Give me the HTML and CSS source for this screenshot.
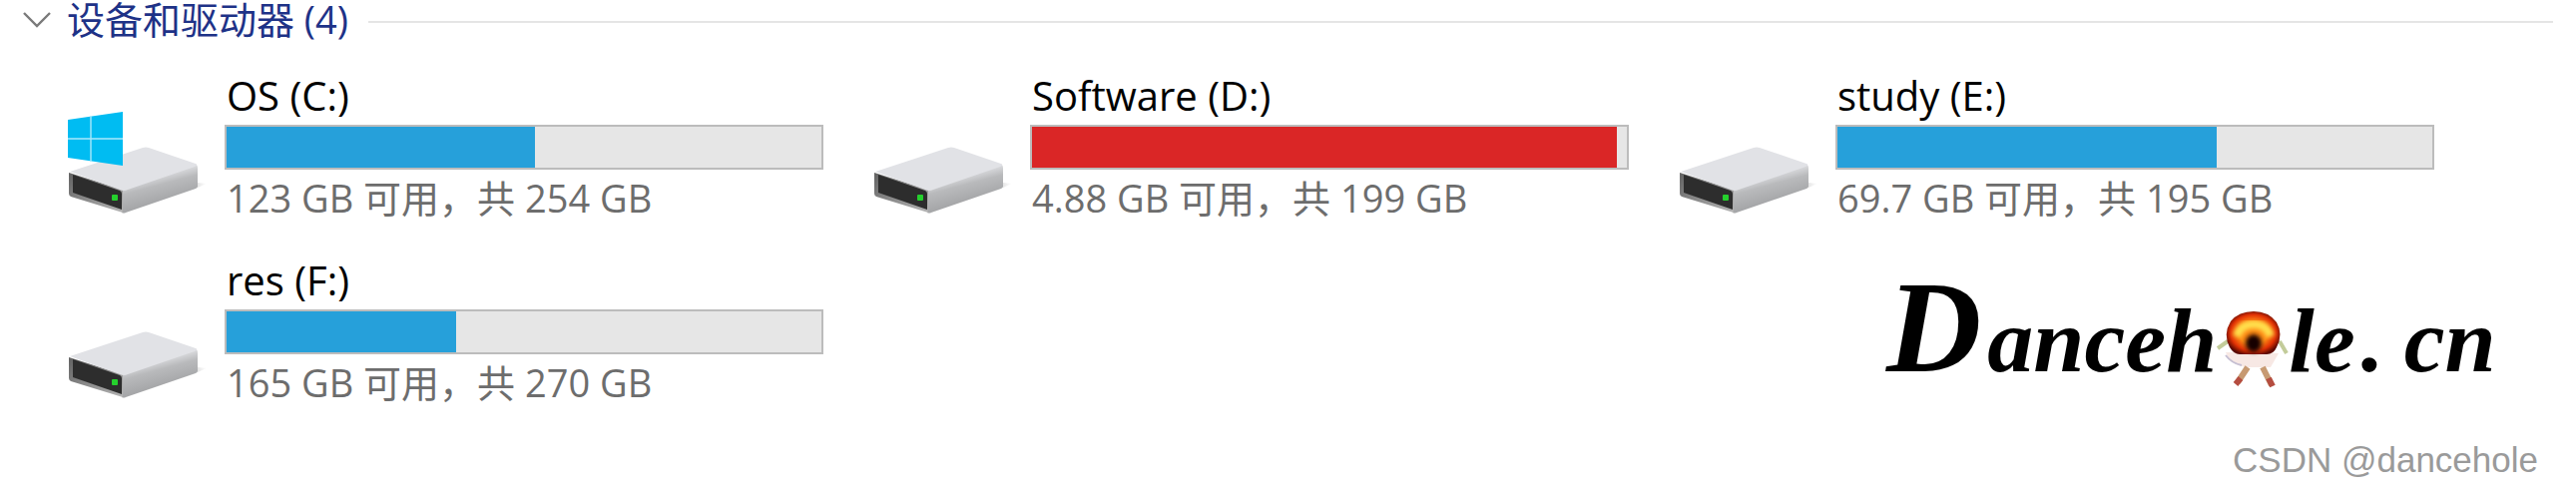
FILE: index.html
```html
<!DOCTYPE html>
<html lang="zh-CN">
<head>
<meta charset="utf-8">
<title>设备和驱动器</title>
<link rel="stylesheet" href="styles.css">
</head>
<body>
<svg class="defs" width="0" height="0" aria-hidden="true">
  <defs>
    <linearGradient id="side" gradientUnits="userSpaceOnUse" x1="88" y1="102" x2="95" y2="128">
      <stop offset="0" stop-color="#dfe0e3"/>
      <stop offset="0.4" stop-color="#b9babc"/>
      <stop offset="1" stop-color="#a6a7a9"/>
    </linearGradient>
    <linearGradient id="rim" x1="0" y1="0" x2="1" y2="1">
      <stop offset="0" stop-color="#626262"/>
      <stop offset="1" stop-color="#b4b4b4"/>
    </linearGradient>
    <linearGradient id="shade" x1="0" y1="0" x2="1" y2="0">
      <stop offset="0" stop-color="#e6e6e6"/>
      <stop offset="1" stop-color="#ffffff"/>
    </linearGradient>
    <symbol id="drive" viewBox="0 0 140 149">
      <path d="M130 110 L139 111 L130 115 Z" fill="url(#shade)"/>
      <path d="M55 117 L128 92 Q130 92 130 96 V114 Q130 115 128 116 L58 140 Q56 141 54 140 Z" fill="url(#side)"/>
      <path d="M1 100 L55 117 V140 L3 124 Q1 123 1 121 Z" fill="url(#rim)"/>
      <path d="M2 99 L75 75 Q78 74 81 75 L128 91 Q131 92 127 94 L60 117 Q56 119 52 117 Z" fill="#e1e2e6"/>
      <path d="M5 102 L52 118 Q54 119 54 121 V137 L5 120 Z" fill="#2d2d2d"/>
      <rect x="44" y="122" width="6" height="6" rx="1" fill="#25d02d"/>
    </symbol>
  </defs>
</svg>
<main class="page">
  <header class="group">
    <h2 class="group-title">
      <button class="toggle" type="button" aria-expanded="true">
        <svg class="chevron" viewBox="0 0 28 16" aria-hidden="true"><path d="M1 1 L14 14 L27 1"/></svg>
        <span class="caption">设备和驱动器 (4)</span>
      </button>
    </h2>
    <span class="rule"></span>
  </header>
  <section class="drives">
    <article class="drive">
      <svg class="icon" viewBox="0 0 140 149" aria-hidden="true">
        <use href="#drive"/>
        <path d="M0 47 L55 39 V93 L0 85 Z" fill="#00bcf2"/>
        <path d="M23 43 V89 M0 66 H55" stroke="#a9e8fb" stroke-width="1.4"/>
      </svg>
      <div class="info">
        <label class="name" for="c">OS (C:)</label>
        <progress class="bar" id="c" max="100" value="51.8"></progress>
        <p class="space">123 GB 可用，共 254 GB</p>
      </div>
    </article>
    <article class="drive">
      <svg class="icon" viewBox="0 0 140 149" aria-hidden="true"><use href="#drive"/></svg>
      <div class="info">
        <label class="name" for="d">Software (D:)</label>
        <progress class="bar full" id="d" max="100" value="98.3"></progress>
        <p class="space">4.88 GB 可用，共 199 GB</p>
      </div>
    </article>
    <article class="drive">
      <svg class="icon" viewBox="0 0 140 149" aria-hidden="true"><use href="#drive"/></svg>
      <div class="info">
        <label class="name" for="e">study (E:)</label>
        <progress class="bar" id="e" max="100" value="63.8"></progress>
        <p class="space">69.7 GB 可用，共 195 GB</p>
      </div>
    </article>
    <article class="drive">
      <svg class="icon" viewBox="0 0 140 149" aria-hidden="true"><use href="#drive"/></svg>
      <div class="info">
        <label class="name" for="f">res (F:)</label>
        <progress class="bar" id="f" max="100" value="38.6"></progress>
        <p class="space">165 GB 可用，共 270 GB</p>
      </div>
    </article>
    <div class="logo">
      <span class="initial">D</span>
      <span>anceh</span>
      <svg class="mascot" viewBox="0 0 72 80" role="img" aria-label="o">
        <defs>
          <radialGradient id="fire" cx="0.5" cy="0.5" r="0.54">
            <stop offset="0.5" stop-color="#ff8a14"/>
            <stop offset="0.78" stop-color="#e23205"/>
            <stop offset="1" stop-color="#5b0800"/>
          </radialGradient>
          <filter id="glow" x="-0.3" y="-0.3" width="1.6" height="1.6">
            <feGaussianBlur stdDeviation="2"/>
          </filter>
        </defs>
        <path d="M11 30 L1 37 M63 30 L70 42" stroke="#c3cc9a" stroke-width="4" fill="none"/>
        <path d="M9 41 Q14 54 30 56 H54 L62 42 Z" fill="#f7e8e4"/>
        <path d="M9 44 Q15 52 25 54" stroke="#c6bfd2" stroke-width="2" fill="none"/>
        <path d="M31 56 L21 71 M46 56 L55 74" stroke="#c79a72" stroke-width="6" fill="none"/>
        <path d="M24 67 L19 73 M52 67 L56 75" stroke="#b54d40" stroke-width="6" fill="none"/>
        <path d="M37 0 Q52 0 60 11 Q67 23 60 36 Q57 43 50 43 H23 Q17 43 13 36 Q6 23 14 10 Q22 0 37 0 Z" fill="url(#fire)"/>
        <path d="M20 25 Q24 13 37 13 Q50 13 54 25" stroke="#ffe04e" stroke-width="8" fill="none" filter="url(#glow)"/>
        <ellipse cx="37" cy="32" rx="8" ry="9" fill="#160000" filter="url(#glow)"/>
      </svg>
      <span>le</span>
      <span class="dot">.</span>
      <span>cn</span>
    </div>
  </section>
  <footer class="credit">CSDN @dancehole</footer>
</main>
</body>
</html>
```
FILE: styles.css
```css
* {
  box-sizing: border-box;
}

body {
  margin: 0;
  background: #fff;
  color: #000;
  font-family: "Open Sans", "Noto Sans CJK SC", sans-serif;
  font-size: 38px;
  line-height: 48px;
}

.defs {
  position: absolute;
}

.group {
  display: flex;
  align-items: center;
  gap: 20px;
  height: 44px;
  padding: 0 23px;
}

.group-title {
  margin: 0;
  font-size: 38px;
  font-weight: 400;
}

.toggle {
  display: flex;
  align-items: center;
  gap: 16px;
  padding: 0 0 4px;
  border: 0;
  background: none;
  color: #1e3287;
  font-family: "Open Sans", "Noto Sans CJK SC", sans-serif;
  font-size: 38px;
  line-height: 40px;
  white-space: nowrap;
}

.caption {
  padding-bottom: 2px;
}

.chevron {
  width: 28px;
  height: 16px;
  fill: none;
  stroke: #7a7a7a;
  stroke-width: 2.4;
}

.rule {
  flex: 1;
  height: 2px;
  background: #e5e5e5;
}

.drives {
  display: grid;
  grid-template-columns: repeat(3, minmax(0, 1fr));
  gap: 36px 50px;
  padding: 29px 142px 0 68px;
}

.drive {
  display: flex;
  gap: 17px;
}

.icon {
  flex: none;
  width: 140px;
  height: 149px;
}

.info {
  display: flex;
  flex: 1;
  flex-direction: column;
  min-width: 0;
}

.name,
.space {
  margin: 0;
  padding-left: 2px;
  white-space: nowrap;
}

.name {
  padding-bottom: 6px;
  font-size: 40px;
  line-height: 46px;
}

.space {
  padding-top: 4px;
  color: #6d6d6d;
}

.bar {
  display: block;
  width: 100%;
  height: 45px;
  border: 2px solid #bcbcbc;
  background: #e6e6e6;
  appearance: none;
}

.bar::-webkit-progress-bar {
  background: #e6e6e6;
}

.bar::-webkit-progress-value {
  background: #26a0da;
}

.full::-webkit-progress-value {
  background: #da2626;
}

.logo {
  display: flex;
  grid-column: 3;
  align-items: baseline;
  padding-left: 208px;
  font-family: "Liberation Serif", serif;
  font-size: 92px;
  font-style: italic;
  font-weight: 700;
  line-height: 140px;
  white-space: nowrap;
}

.initial {
  padding-right: 6px;
  font-size: 132px;
}

.mascot {
  flex: none;
  align-self: flex-start;
  width: 72px;
  height: 80px;
  margin-top: 54px;
}

.dot {
  padding: 0 20px 0 6px;
}

.credit {
  padding: 26px 38px 0 0;
  color: #9a9a9a;
  font-family: "Liberation Sans", sans-serif;
  font-size: 35px;
  text-align: right;
}
```
